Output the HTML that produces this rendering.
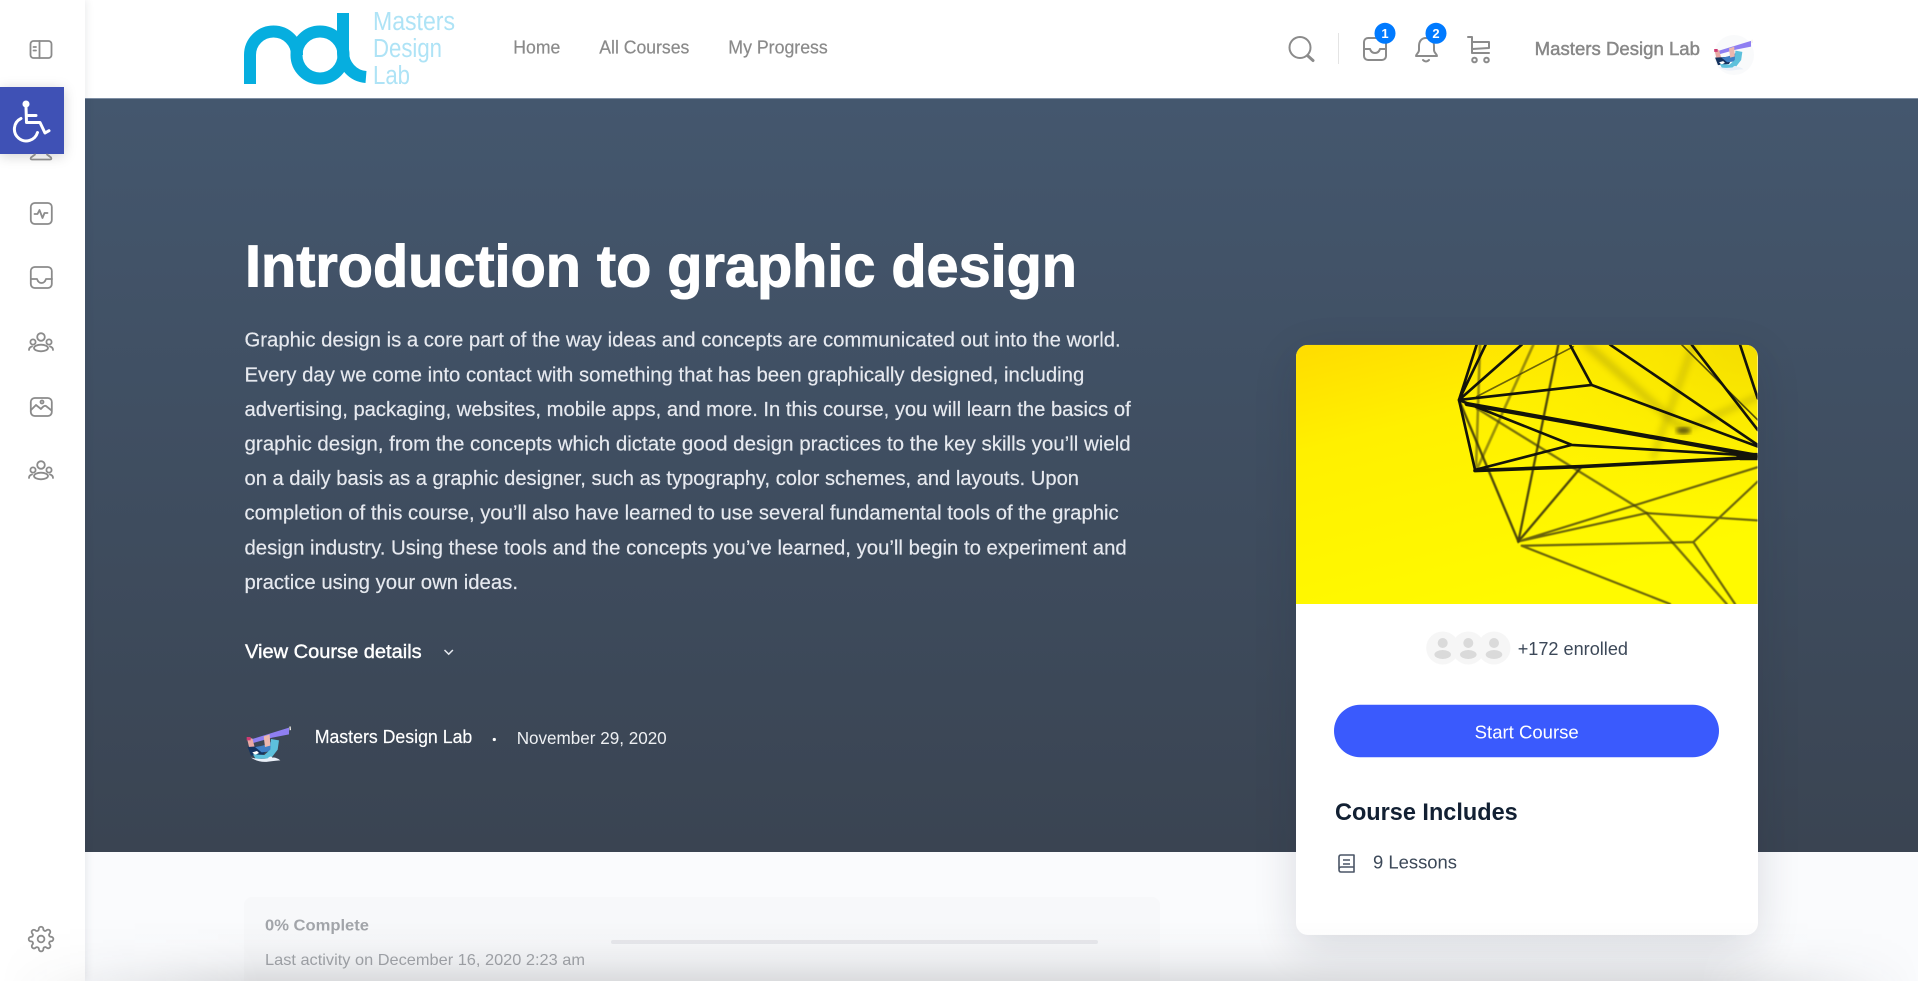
<!DOCTYPE html>
<html lang="en"><head><meta charset="utf-8"><title>Introduction to graphic design</title>
<style>
html,body{margin:0;padding:0;background:#fff;width:1920px;height:981px;overflow:hidden}
#wrap{position:relative;left:0;top:0;width:1920px;height:981px;overflow:hidden;font-family:"Liberation Sans",Arial,sans-serif}
#wrap div{position:absolute}
#main{position:absolute;left:0;top:0}
text{font-family:"Liberation Sans",Arial,sans-serif}
</style></head><body>
<div id="wrap">
<div style="left:85px;top:97.5px;width:1832.5px;height:754.5px;background:linear-gradient(180deg,#44576e 0%,#3a4452 100%);border-top:1px solid #7e8ea3;box-sizing:border-box"></div>
<div style="left:85px;top:852px;width:1832.5px;height:129px;background:#fafbfd"></div>
<div style="left:0;top:0;width:85px;height:981px;background:#fff;box-shadow:1px 0 8px rgba(40,50,70,.1)"></div>
<div style="left:244px;top:897px;width:916px;height:84px;background:#f7f8fa;border-radius:8px 8px 0 0"></div>
<div style="left:611px;top:940px;width:487px;height:4px;background:#e7e8ec;border-radius:2px"></div>
<div style="left:1296px;top:344.7px;width:461.7px;height:590.3px;background:#fff;border-radius:12px;box-shadow:0 12px 44px rgba(20,30,50,.14)"></div>
<div style="left:0;top:87px;width:64px;height:66.7px;background:#3f51b5;box-shadow:0 2px 12px rgba(0,0,0,.18)"></div>

<svg id="main" width="1920" height="981" viewBox="0 0 1920 981" xmlns="http://www.w3.org/2000/svg">
<defs>
<linearGradient id="y1" x1="0" y1="0" x2=".45" y2="1"><stop offset="0" stop-color="#ffdc00"/><stop offset=".35" stop-color="#fff000"/><stop offset="1" stop-color="#fffa00"/></linearGradient>
<radialGradient id="y2" cx="1" cy="0" r=".7"><stop offset="0" stop-color="#eccf00" stop-opacity=".6"/><stop offset="1" stop-color="#ffee00" stop-opacity="0"/></radialGradient>
<clipPath id="imgclip"><path d="M48 823V80a36 36 0 0 1 36-36H1397a36 36 0 0 1 36 36V823z"/></clipPath>
<filter id="b1"><feGaussianBlur stdDeviation="1.5"/></filter>
<filter id="b2"><feGaussianBlur stdDeviation="6"/></filter>
<filter id="b3"><feGaussianBlur stdDeviation="10"/></filter>
<symbol id="av" viewBox="0 0 210 180">
<path d="M52 72L162 38V58L112 68 54 84z" fill="#8f7ff2"/>
<path d="M163 35l4-1 1 11-4 1z" fill="#f3efe6"/>
<path d="M36 70L52 70 60 100 44 104z" fill="#e9a8a4"/>
<path d="M35 66h12v10h-12z" fill="#cf3a72"/>
<path d="M38 96L100 92 86 118 48 122z" fill="#15335f"/>
<path d="M60 96Q95 92 112 78L122 80 116 108 80 112z" fill="#3f7fc5"/>
<path d="M52 112l14-4 6 6-12 6z" fill="#fff"/>
<path d="M86 64L104 58 106 92 90 96z" fill="#ecb7ae"/>
<path d="M108 72L132 76 128 104 108 130 62 132 54 118 88 120 106 104z" fill="#5dc0dc"/>
<path d="M48 128q25 16 52 12t36-4q-14-10-24-8-4-8-14 2-24 4-50-2z" fill="#e9eff8"/>
</symbol>
</defs>

<!-- logo -->
<g fill="none" stroke="#06aedf" stroke-width="12">
<path d="M250 84V55A23.5 23.5 0 0 1 297 55"/>
<circle cx="320" cy="55" r="23.5"/>
<path d="M343 13V52A25 25 0 0 0 366 77"/>
</g>
<g fill="#aee3f6" font-size="25.5">
<text x="373" y="30" textLength="82" lengthAdjust="spacingAndGlyphs">Masters</text>
<text x="373" y="57" textLength="69" lengthAdjust="spacingAndGlyphs">Design</text>
<text x="373" y="84" textLength="37" lengthAdjust="spacingAndGlyphs">Lab</text>
</g>

<!-- nav -->
<g fill="#8a8a8a" stroke="#8a8a8a" stroke-width=".2" font-size="18">
<text x="513.3" y="53.3" textLength="47" lengthAdjust="spacingAndGlyphs">Home</text>
<text x="599.3" y="53.3" textLength="90" lengthAdjust="spacingAndGlyphs">All Courses</text>
<text x="728.3" y="53.3" textLength="99.5" lengthAdjust="spacingAndGlyphs">My Progress</text>
</g>

<!-- header icons -->
<g fill="none" stroke="#8b8b8b" stroke-width="2" stroke-linecap="round" stroke-linejoin="round">
<circle cx="1300" cy="47.5" r="10.5"/><path d="M1308 56l5 4.5" stroke-width="3"/>
<rect x="1364" y="38" width="22" height="22" rx="4"/>
<path d="M1364 49h6c1 3 3 4 5 4s4-1 5-4h6"/>
<path d="M1426 38c-5 0-7 4-7 8v4c0 3-3 4-3 6h21c0-2-3-3-3-6v-4c0-4-2-8-8-8z"/>
<path d="M1423 60q3 3 6 0"/>
<path d="M1468 37h4v16h17M1472 42h17v6l-17 1"/>
<circle cx="1474.5" cy="60" r="2.3"/><circle cx="1486.5" cy="60" r="2.3"/>
</g>
<rect x="1338" y="33" width="1" height="31" fill="#e4e4e4"/>
<circle cx="1385" cy="33.3" r="10.5" fill="#007aff"/>
<text x="1385" y="38" font-size="13" font-weight="700" fill="#fff" text-anchor="middle">1</text>
<circle cx="1436" cy="33.3" r="10.5" fill="#007aff"/>
<text x="1436" y="38" font-size="13" font-weight="700" fill="#fff" text-anchor="middle">2</text>
<text x="1534.7" y="55" font-size="18" fill="#888" stroke="#888" stroke-width=".45" textLength="165.3" lengthAdjust="spacingAndGlyphs">Masters Design Lab</text>
<circle cx="1734" cy="55" r="20" fill="#f9fafb"/>
<use href="#av" x="1704" y="29.8" width="61" height="52.2"/>

<!-- sidebar icons -->
<g fill="none" stroke="#8b8b8b" stroke-width="1.8" stroke-linecap="round" stroke-linejoin="round">
<rect x="30.5" y="41" width="21" height="17" rx="3"/><path d="M39.5 41v17M33.5 47h2.5M33.5 50.5h2.5"/>
<path d="M35 154.5l-4 3q-1 2 1 2h18q2 0 1-2l-4-3"/>
<rect x="30.8" y="203" width="21" height="21" rx="4"/><path d="M34.5 214h3l2-4 3 8 2-5h3"/>
<rect x="30.8" y="267" width="21" height="21" rx="4"/><path d="M31 279h6c1 3 3 4 4.5 4s3.5-1 4.5-4h6"/>
<circle cx="41" cy="337" r="3.8"/><circle cx="33" cy="342" r="2.6"/><circle cx="49" cy="342" r="2.6"/><ellipse cx="41" cy="348" rx="7" ry="3.3"/><path d="M29 350c0-2 1-3 3-3.5M53 350c0-2-1-3-3-3.5"/>
<rect x="30.8" y="398" width="21" height="18" rx="4"/><path d="M31 410l5-5 5 4q3-4 5-3l5 4"/><circle cx="42" cy="402" r="1.5"/>
<g transform="translate(0,128)"><circle cx="41" cy="337" r="3.8"/><circle cx="33" cy="342" r="2.6"/><circle cx="49" cy="342" r="2.6"/><ellipse cx="41" cy="348" rx="7" ry="3.3"/><path d="M29 350c0-2 1-3 3-3.5M53 350c0-2-1-3-3-3.5"/></g>
<g transform="translate(27.6,925.6) scale(1.12)" stroke-width="1.6"><circle cx="12" cy="12" r="3"/><path d="M19.4 15a1.65 1.65 0 0 0 .33 1.82l.06.06a2 2 0 0 1 0 2.83 2 2 0 0 1-2.83 0l-.06-.06a1.65 1.65 0 0 0-1.82-.33 1.65 1.65 0 0 0-1 1.51V21a2 2 0 0 1-2 2 2 2 0 0 1-2-2v-.09A1.65 1.65 0 0 0 9 19.4a1.65 1.65 0 0 0-1.82.33l-.06.06a2 2 0 0 1-2.83 0 2 2 0 0 1 0-2.83l.06-.06a1.65 1.65 0 0 0 .33-1.82 1.65 1.65 0 0 0-1.51-1H3a2 2 0 0 1-2-2 2 2 0 0 1 2-2h.09A1.65 1.65 0 0 0 4.6 9a1.65 1.65 0 0 0-.33-1.82l-.06-.06a2 2 0 0 1 0-2.83 2 2 0 0 1 2.83 0l.06.06a1.65 1.65 0 0 0 1.82.33H9a1.65 1.65 0 0 0 1-1.51V3a2 2 0 0 1 2-2 2 2 0 0 1 2 2v.09a1.65 1.65 0 0 0 1 1.51 1.65 1.65 0 0 0 1.82-.33l.06-.06a2 2 0 0 1 2.83 0 2 2 0 0 1 0 2.83l-.06.06a1.65 1.65 0 0 0-.33 1.82V9a1.65 1.65 0 0 0 1.51 1H21a2 2 0 0 1 2 2 2 2 0 0 1-2 2h-.09a1.65 1.65 0 0 0-1.51 1z"/></g>
</g>

<!-- wheelchair -->
<g fill="none" stroke="#fff" stroke-width="3" stroke-linecap="round" stroke-linejoin="round">
<circle cx="26" cy="104" r="2.8" fill="#fff" stroke-width="1.5"/>
<path d="M26 107l.5 15.5H40l5 10.5 4-2.3M26.5 115.5H36"/>
<path d="M21 118.5a11.8 11.8 0 1 0 16.5 14"/>
</g>

<!-- hero text -->
<text x="245" y="286.7" font-size="59.5" font-weight="700" fill="#fff" stroke="#fff" stroke-width="1" textLength="832" lengthAdjust="spacingAndGlyphs">Introduction to graphic design</text>
<g fill="#e6e9ef" stroke="#e6e9ef" stroke-width=".18" font-size="20.4">
<text x="244.5" y="346.7" textLength="876.2" lengthAdjust="spacingAndGlyphs">Graphic design is a core part of the way ideas and concepts are communicated out into the world.</text>
<text x="244.5" y="381.3" textLength="839.8" lengthAdjust="spacingAndGlyphs">Every day we come into contact with something that has been graphically designed, including</text>
<text x="244.5" y="415.9" textLength="886.2" lengthAdjust="spacingAndGlyphs">advertising, packaging, websites, mobile apps, and more. In this course, you will learn the basics of</text>
<text x="244.5" y="450.5" textLength="886.2" lengthAdjust="spacingAndGlyphs">graphic design, from the concepts which dictate good design practices to the key skills you’ll wield</text>
<text x="244.5" y="485.1" textLength="834.5" lengthAdjust="spacingAndGlyphs">on a daily basis as a graphic designer, such as typography, color schemes, and layouts. Upon</text>
<text x="244.5" y="519.7" textLength="874.2" lengthAdjust="spacingAndGlyphs">completion of this course, you’ll also have learned to use several fundamental tools of the graphic</text>
<text x="244.5" y="554.3" textLength="882.2" lengthAdjust="spacingAndGlyphs">design industry. Using these tools and the concepts you’ve learned, you’ll begin to experiment and</text>
<text x="244.5" y="588.9" textLength="273.5" lengthAdjust="spacingAndGlyphs">practice using your own ideas.</text>
</g>
<text x="245" y="658" font-size="19" fill="#fff" stroke="#fff" stroke-width=".4" textLength="176.7" lengthAdjust="spacingAndGlyphs">View Course details</text>
<path d="M444.5 650l4.2 4.2 4.2-4.2" fill="none" stroke="#e6e9ef" stroke-width="1.5"/>
<use href="#av" x="235" y="715" width="70" height="60"/>
<text x="314.7" y="743" font-size="18.4" fill="#fff" stroke="#fff" stroke-width=".15" textLength="157.6" lengthAdjust="spacingAndGlyphs">Masters Design Lab</text>
<circle cx="494.3" cy="739.5" r="1.6" fill="#fff"/>
<text x="516.7" y="744" font-size="17.4" fill="#eef0f3" textLength="150" lengthAdjust="spacingAndGlyphs">November 29, 2020</text>

<!-- progress text -->
<text x="265" y="930.7" font-size="16" font-weight="700" fill="#a2a5aa" textLength="104" lengthAdjust="spacingAndGlyphs">0% Complete</text>
<text x="265" y="965" font-size="15.6" fill="#a3a6ab" textLength="320" lengthAdjust="spacingAndGlyphs">Last activity on December 16, 2020 2:23 am</text>

<!-- card image -->
<svg x="1296" y="344.7" width="461.7" height="259.3" viewBox="48 44 1385 779" preserveAspectRatio="none">
<g clip-path="url(#imgclip)">
<rect x="48" y="44" width="1385" height="779" fill="url(#y1)"/>
<rect x="48" y="44" width="1385" height="779" fill="url(#y2)"/>
<g fill="none" stroke="#7a6f08" stroke-linecap="round">
<path d="M920 44L1210 300" stroke-width="22" opacity=".3" filter="url(#b3)"/>
<path d="M1120 380L1240 44M1210 300L1433 200" stroke-width="16" opacity=".3" filter="url(#b3)"/>
<ellipse cx="1210" cy="302" rx="22" ry="10" fill="#3a3608" stroke="none" opacity=".75" filter="url(#b2)"/>
<path d="M600 44L588 420M590 420L760 44" stroke="#5a5208" stroke-width="8" opacity=".6" filter="url(#b1)"/>
<path d="M590 200L880 50" stroke="#4a4408" stroke-width="5" opacity=".8"/>
<path d="M590 235L1100 550 1340 823" stroke="#4a4408" stroke-width="7" opacity=".75" filter="url(#b1)"/>
<path d="M1205 44L1433 270" stroke="#3a3608" stroke-width="5" opacity=".85"/>
<path d="M537 210L715 635L905 410M715 635L835 44" stroke="#3a3608" stroke-width="7" opacity=".9" filter="url(#b1)"/>
<path d="M715 635L1433 412M715 635L1100 550 1433 572M725 648L1240 637 1433 455M1240 637L1365 823M725 648L1170 823" stroke="#4a4408" stroke-width="6.5" opacity=".82" filter="url(#b1)"/>
</g>
<g fill="none" stroke="#14140a" stroke-linejoin="round" stroke-linecap="round">
<path d="M537 210L590 44M537 210L617 44M537 210L725 44M537 210L935 165L870 44M935 165L1433 350M537 210L875 345L1433 378M537 210L585 420L875 345M990 44L1433 345M1235 44L1433 300M1380 44L1433 205" stroke-width="8"/>
<path d="M560 222L1433 378" stroke-width="13"/>
<path d="M585 422L905 410L1433 382" stroke-width="11"/>
<path d="M1380 380L1433 380" stroke-width="22"/>
</g>
</g>
</svg>

<!-- enrolled -->
<g>
<circle cx="1442.7" cy="648" r="16.5" fill="#f6f6f6"/><circle cx="1468.3" cy="648" r="16.5" fill="#f6f6f6"/><circle cx="1494" cy="648" r="16.5" fill="#f6f6f6"/>
<g fill="#dadada">
<circle cx="1442.7" cy="643" r="5"/><ellipse cx="1442.7" cy="654.5" rx="8.3" ry="4.5"/>
<circle cx="1468.3" cy="643" r="5"/><ellipse cx="1468.3" cy="654.5" rx="8.3" ry="4.5"/>
<circle cx="1494" cy="643" r="5"/><ellipse cx="1494" cy="654.5" rx="8.3" ry="4.5"/>
</g>
</g>
<text x="1517.7" y="655" font-size="18" fill="#3c4858" textLength="110.3" lengthAdjust="spacingAndGlyphs">+172 enrolled</text>

<rect x="1334" y="704.7" width="385" height="52.6" rx="26.3" fill="#3a5afd"/>
<text x="1526.7" y="738.3" font-size="18" fill="#fff" text-anchor="middle" textLength="104" lengthAdjust="spacingAndGlyphs">Start Course</text>

<text x="1335" y="820" font-size="23.6" font-weight="700" fill="#122033" textLength="182.7" lengthAdjust="spacingAndGlyphs">Course Includes</text>
<path d="M1339 869V857q0-2 2-2h13v17h-13q-2 0-2-2.5t2-2.5h13M1343 860h7M1343 864h7" fill="none" stroke="#4a5566" stroke-width="1.6" stroke-linejoin="round"/>
<text x="1373" y="868.7" font-size="18" fill="#3c4858" textLength="84" lengthAdjust="spacingAndGlyphs">9 Lessons</text>
</svg>

<!-- bottom shade -->
<div style="left:0;top:921px;width:1920px;height:60px;background:linear-gradient(180deg,rgba(30,32,38,0) 0%,rgba(30,32,38,.015) 35%,rgba(30,32,38,.05) 65%,rgba(30,32,38,.13) 100%);-webkit-mask-image:linear-gradient(90deg,transparent 0,rgba(0,0,0,.3) 85px,#000 260px,#000 1700px,rgba(0,0,0,.3) 1850px,transparent 1920px);mask-image:linear-gradient(90deg,transparent 0,rgba(0,0,0,.3) 85px,#000 260px,#000 1700px,rgba(0,0,0,.3) 1850px,transparent 1920px)"></div>
</div>
</body></html>
